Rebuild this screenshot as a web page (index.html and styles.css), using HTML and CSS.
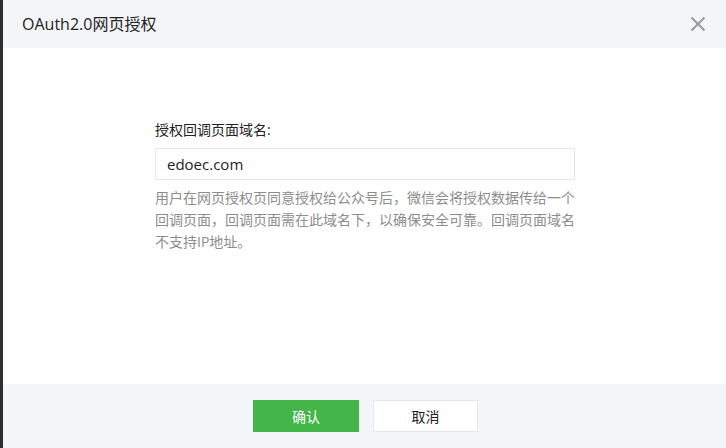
FILE: index.html
```html
<!DOCTYPE html>
<html lang="zh-CN">
<head>
<meta charset="utf-8">
<title>OAuth2.0网页授权</title>
<link rel="stylesheet" href="styles.css">
</head>
<body>
<div class="screen">
  <div class="backdrop-edge"></div>
  <div class="dialog">
    <div class="dialog-header">
      <h3 class="dialog-title">OAuth2.0网页授权</h3>
      <button class="close-btn" aria-label="关闭">
        <svg width="16" height="16" viewBox="0 0 16 16"><path d="M1.5 1.5 L14.5 14.5 M14.5 1.5 L1.5 14.5" stroke="#9a9a9a" stroke-width="2" fill="none"/></svg>
      </button>
    </div>
    <div class="dialog-body">
      <div class="form">
        <label class="form-label">授权回调页面域名:</label>
        <div class="input-box">edoec.com</div>
        <p class="form-tips">用户在网页授权页同意授权给公众号后，微信会将授权数据传给一个回调页面，回调页面需在此域名下，以确保安全可靠。回调页面域名不支持IP地址。</p>
      </div>
    </div>
    <div class="dialog-footer">
      <button class="btn btn-primary">确认</button>
      <button class="btn btn-default">取消</button>
    </div>
  </div>
</div>
</body>
</html>
```

FILE: styles.css
```css
html, body {
  margin: 0;
  padding: 0;
  height: 100%;
  overflow: hidden;
}
body {
  font-family: "Open Sans", "Noto Sans CJK SC", sans-serif;
  color: #353535;
  background: #fff;
}
.screen {
  display: flex;
  height: 448px;
}
.backdrop-edge {
  width: 3px;
  background: #2f2f2f;
  flex: none;
}
.dialog {
  flex: 1;
  display: flex;
  flex-direction: column;
  background: #fff;
}
.dialog-header {
  height: 48px;
  background: #f4f5f9;
  display: flex;
  align-items: center;
  justify-content: space-between;
  padding: 0 20px 0 19px;
  flex: none;
}
.dialog-title {
  margin: 0;
  font-size: 16px;
  font-weight: normal;
  color: #222;
  line-height: 20px;
}
.close-btn {
  border: 0;
  background: transparent;
  padding: 0;
  width: 16px;
  height: 16px;
  display: flex;
  cursor: pointer;
}
.dialog-body {
  flex: 1;
  display: flex;
  justify-content: center;
  padding-top: 72px;
  padding-left: 1px;
}
.form {
  width: 420px;
}
.form-label {
  display: block;
  font-size: 14px;
  line-height: 20px;
  color: #222;
  margin-bottom: 8px;
}
.input-box {
  height: 30px;
  border: 1px solid #e7e7eb;
  padding: 0 11px;
  font-size: 15px;
  line-height: 30px;
  color: #222;
}
.form-tips {
  margin: 7px 0 0;
  font-size: 14px;
  line-height: 22px;
  color: #8d8d8d;
}
.dialog-footer {
  height: 64px;
  background: #f4f5f9;
  display: flex;
  align-items: center;
  justify-content: center;
  gap: 14px;
  padding-left: 2px;
  flex: none;
}
.btn {
  width: 106px;
  height: 32px;
  font-family: "Open Sans", "Noto Sans CJK SC", sans-serif;
  font-size: 14px;
  border-radius: 0;
  cursor: pointer;
  padding: 0;
}
.btn-primary {
  background: #44b549;
  border: 1px solid #44b549;
  color: #fff;
}
.btn-default {
  width: 105px;
  background: #fff;
  border: 1px solid #e4e8eb;
  color: #222;
}
```
